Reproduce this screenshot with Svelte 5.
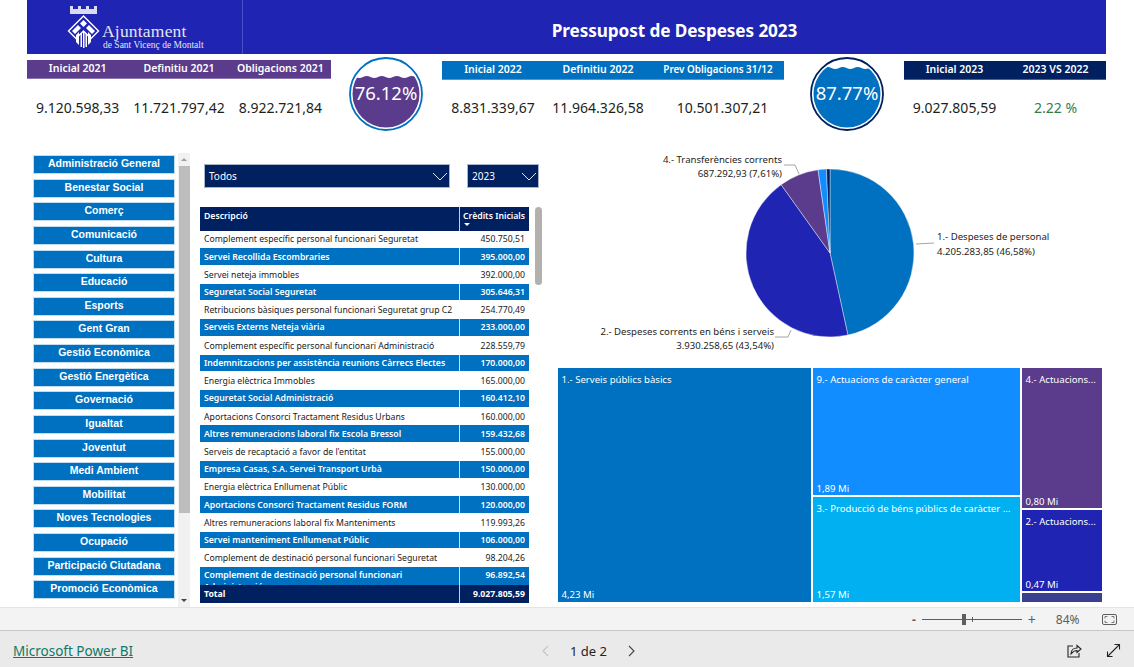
<script>
  const areas = [
    "Administració General", "Benestar Social", "Comerç", "Comunicació", "Cultura", "Educació",
    "Esports", "Gent Gran", "Gestió Econòmica", "Gestió Energètica", "Governació", "Igualtat",
    "Joventut", "Medi Ambient", "Mobilitat", "Noves Tecnologies", "Ocupació",
    "Participació Ciutadana", "Promoció Econòmica",
  ];

  const rows = [
    ["Complement específic personal funcionari Seguretat", "450.750,51"],
    ["Servei Recollida Escombraries", "395.000,00"],
    ["Servei neteja immobles", "392.000,00"],
    ["Seguretat Social Seguretat", "305.646,31"],
    ["Retribucions bàsiques personal funcionari Seguretat grup C2", "254.770,49"],
    ["Serveis Externs Neteja viària", "233.000,00"],
    ["Complement específic personal funcionari Administració", "228.559,79"],
    ["Indemnitzacions per assistència reunions Càrrecs Electes", "170.000,00"],
    ["Energia elèctrica Immobles", "165.000,00"],
    ["Seguretat Social Administració", "160.412,10"],
    ["Aportacions Consorci Tractament Residus Urbans", "160.000,00"],
    ["Altres remuneracions laboral fix Escola Bressol", "159.432,68"],
    ["Serveis de recaptació a favor de l'entitat", "155.000,00"],
    ["Empresa Casas, S.A. Servei Transport Urbà", "150.000,00"],
    ["Energia elèctrica Enllumenat Públic", "130.000,00"],
    ["Aportacions Consorci Tractament Residus FORM", "120.000,00"],
    ["Altres remuneracions laboral fix Manteniments", "119.993,26"],
    ["Servei manteniment Enllumenat Públic", "106.000,00"],
    ["Complement de destinació personal funcionari Seguretat", "98.204,26"],
  ];

  const slices = [
    { pct: 46.58, color: "#0070c0" },
    { pct: 43.54, color: "#2024b2" },
    { pct: 7.61, color: "#5a3b8c" },
    { pct: 1.6, color: "#118dff" },
    { pct: 0.67, color: "#00205f" },
  ];

  const cx = 272;
  const cy = 100;
  const r = 84;

  function arcs() {
    let acc = 0;
    return slices.map((s) => {
      const a0 = (acc / 100) * Math.PI * 2;
      acc += s.pct;
      const a1 = (acc / 100) * Math.PI * 2;
      const large = s.pct > 50 ? 1 : 0;
      const x0 = cx + r * Math.sin(a0);
      const y0 = cy - r * Math.cos(a0);
      const x1 = cx + r * Math.sin(a1);
      const y1 = cy - r * Math.cos(a1);
      return {
        color: s.color,
        d: `M${cx} ${cy}L${x0.toFixed(2)} ${y0.toFixed(2)}A${r} ${r} 0 ${large} 1 ${x1.toFixed(2)} ${y1.toFixed(2)}Z`,
      };
    });
  }
</script>

{#snippet gauge(color, ring, value, level)}
  <svg class="gauge" width="76" height="76" viewBox="0 0 76 76">
    <defs>
      <clipPath id={"c" + level}><circle cx="38" cy="38" r="33.5" /></clipPath>
    </defs>
    <circle cx="38" cy="38" r="36" fill="#fff" stroke={ring} stroke-width="1.8" />
    <path
      clip-path={"url(#c" + level + ")"}
      fill={color}
      d={`M0 ${level}q3.750 -2 7.500 0t7.500 0 7.500 0 7.500 0 7.500 0 7.500 0 7.500 0 7.500 0 7.500 0 7.500 0 7.500 0V76H0Z`}
    />
    <text x="38" y="44" text-anchor="middle" class="gauge-text">{value}</text>
  </svg>
{/snippet}

{#snippet chevron()}
  <svg width="16" height="9" viewBox="0 0 16 9"><path d="M1 1l7 7 7-7" fill="none" stroke="#dfe4ee" stroke-width="1" /></svg>
{/snippet}

<div class="page">
  <div class="report">
    <header class="banner">
      <div class="logo">
        <svg width="33" height="44" viewBox="0 0 33 44">
          <path fill="#d9d9f0" d="M3 1h3v3h5V1h3v3h5V1h3v3h5V1h3v8H3z" />
          <path fill="none" stroke="#fff" stroke-width="1.400" d="M16.500 11L31.500 26 24 33.500 16.500 26 9 33.500 1.500 26z" />
          <path fill="#fff" d="M16.500 15l3.500 3.500-3.500 3.500-3.500-3.500zM5 26l6-6 3 3-6 6zM28 26l-6-6-3 3 6 6z" />
          <path fill="#fff" d="M9 30l3-3v13l-3-3zM24 30l-3-3v13l3-3z" />
          <path fill="#fff" d="M13.500 28h1.500v14h-1.500zM16 27h1.500v16H16zM18.500 28H20v14h-1.500z" />
        </svg>
        <div class="logo-text">
          <span class="logo-main">Ajuntament</span>
          <span class="logo-sub">de Sant Vicenç de Montalt</span>
        </div>
      </div>
      <h1>Pressupost de Despeses 2023</h1>
    </header>

    <section class="kpis">
      <div class="kpi-group g2021">
        <div class="heads purple">
          <span>Inicial 2021</span><span>Definitiu 2021</span><span>Obligacions 2021</span>
        </div>
        <div class="vals"><span>9.120.598,33</span><span>11.721.797,42</span><span>8.922.721,84</span></div>
      </div>
      <div class="gauge-wrap gw1">{@render gauge("#5a3b8c", "#0070c0", "76.12%", 21)}</div>
      <div class="kpi-group g2022">
        <div class="heads blue">
          <span class="c1">Inicial 2022</span><span class="c2">Definitiu 2022</span><span class="c3 small">Prev Obligacions 31/12</span>
        </div>
        <div class="vals"><span class="c1">8.831.339,67</span><span class="c2">11.964.326,58</span><span class="c3 nudge">10.501.307,21</span></div>
      </div>
      <div class="gauge-wrap gw2">{@render gauge("#0070c0", "#00205f", "87.77%", 12)}</div>
      <div class="kpi-group g2023">
        <div class="heads navy">
          <span>Inicial 2023</span><span>2023 VS 2022</span>
        </div>
        <div class="vals"><span>9.027.805,59</span><span class="green">2.22 %</span></div>
      </div>
    </section>

    <section class="body">
      <aside class="slicer">
        <ul>
          {#each areas as area}
            <li>{area}</li>
          {/each}
        </ul>
        <div class="scroll">
          <span class="arrow up"></span>
          <span class="thumb"></span>
          <span class="arrow down"></span>
        </div>
      </aside>

      <div class="middle">
        <div class="filters">
          <div class="drop wide"><span>Todos</span>{@render chevron()}</div>
          <div class="drop narrow"><span>2023</span>{@render chevron()}</div>
        </div>
        <div class="table-wrap">
          <div class="table">
            <div class="row head">
              <span class="desc">Descripció</span>
              <span class="amt">Crèdits Inicials<i class="sort"></i></span>
            </div>
            {#each rows as row, i}
              <div class="row" class:alt={i % 2 === 1}>
                <span class="desc">{row[0]}</span>
                <span class="amt">{row[1]}</span>
              </div>
            {/each}
            <div class="row alt clipped">
              <span class="desc">Complement de destinació personal funcionari Administració</span>
              <span class="amt">96.892,54</span>
            </div>
            <div class="row total">
              <span class="desc">Total</span>
              <span class="amt">9.027.805,59</span>
            </div>
          </div>
          <span class="table-thumb"></span>
        </div>
      </div>

      <div class="charts">
        <svg class="pie" width="544" height="212" viewBox="0 0 544 212">
          {#each arcs() as a}
            <path d={a.d} fill={a.color} stroke="#fff" stroke-width="0.4" />
          {/each}
          <path class="leader" d="M226 12h11l4 9" />
          <path class="leader" d="M358 91L376 90" />
          <path class="leader" d="M233 177l-3 7h-13" />
          <text class="lbl" x="224" y="10" text-anchor="end">4.- Transferències corrents</text>
          <text class="lbl" x="224" y="24" text-anchor="end">687.292,93 (7,61%)</text>
          <text class="lbl" x="379" y="87">1.- Despeses de personal</text>
          <text class="lbl" x="379" y="102">4.205.283,85 (46,58%)</text>
          <text class="lbl" x="216" y="182" text-anchor="end">2.- Despeses corrents en béns i serveis</text>
          <text class="lbl" x="216" y="196" text-anchor="end">3.930.258,65 (43,54%)</text>
        </svg>

        <div class="treemap">
          <div class="tile t1"><span>1.- Serveis públics bàsics</span><span>4,23 Mi</span></div>
          <div class="tcol mid">
            <div class="tile t9"><span>9.- Actuacions de caràcter general</span><span>1,89 Mi</span></div>
            <div class="tile t3"><span>3.- Producció de béns públics de caràcter ...</span><span>1,57 Mi</span></div>
          </div>
          <div class="tcol right">
            <div class="tile t4"><span>4.- Actuacions...</span><span>0,80 Mi</span></div>
            <div class="tile t2"><span>2.- Actuacions...</span><span>0,47 Mi</span></div>
            <div class="tile t0"></div>
          </div>
        </div>
      </div>
    </section>
  </div>

  <div class="zoombar">
    <span class="minus">-</span>
    <div class="slider"><i class="knob"></i><i class="tick"></i></div>
    <span class="plus">+</span>
    <span class="pct">84%</span>
    <svg width="15" height="11" viewBox="0 0 15 11" class="fit">
      <rect x="0.5" y="0.5" width="14" height="10" rx="1.5" fill="none" stroke="#605e5c" />
      <path d="M3 4.5V2.5h2.5M12 4.5V2.5H9.500M3 6.500v2h2.500M12 6.500v2H9.500" fill="none" stroke="#605e5c" stroke-width="0.8" />
    </svg>
  </div>

  <footer class="footer">
    <a class="brand" href="#top">Microsoft Power BI</a>
    <div class="pager">
      <svg width="9" height="12" viewBox="0 0 9 12"><path d="M7 1L2 6l5 5" fill="none" stroke="#c4c4c4" stroke-width="1.100" /></svg>
      <span>1 de 2</span>
      <svg width="9" height="12" viewBox="0 0 9 12"><path d="M2 1l5 5-5 5" fill="none" stroke="#444" stroke-width="1.100" /></svg>
    </div>
    <div class="actions">
      <svg width="16" height="16" viewBox="0 0 16 16">
        <path d="M7 3H2v11h11v-4" fill="none" stroke="#252423" stroke-width="1.100" />
        <path d="M5 11c0-4 3-6 6-6V2.500L15 6l-4 3.500V7.500c-2 0-4 1-6 3.500z" fill="none" stroke="#252423" stroke-width="1.100" />
      </svg>
      <svg width="15" height="15" viewBox="0 0 15 15">
        <path d="M1.500 13.500l12-12M8.500 1.500h5v5M1.500 8.500v5h5" fill="none" stroke="#252423" stroke-width="1.100" />
      </svg>
    </div>
  </footer>
</div>

<style>
  :global(body) {
    margin: 0;
    background: #fff;
  }

  .page {
    width: 1134px;
    height: 667px;
    overflow: hidden;
    display: flex;
    flex-direction: column;
    font-family: "Noto Sans", "Open Sans", sans-serif;
    color: #252423;
  }

  .report {
    height: 607px;
    padding-left: 27px;
    box-sizing: border-box;
    background: #fff;
    overflow: hidden;
  }

  .banner {
    width: 1079px;
    height: 54px;
    background: #2024b2;
    display: flex;
    align-items: center;
    color: #fff;
  }

  .logo {
    width: 216px;
    height: 54px;
    box-sizing: border-box;
    border-right: 1px solid #4a4ec4;
    padding: 5px 0 0 40px;
    display: flex;
    align-items: flex-start;
  }

  .logo-text {
    display: flex;
    flex-direction: column;
    font-family: "Liberation Serif", serif;
    color: #e4e4f4;
    margin: 18px 0 0 2px;
  }

  .logo-main {
    font-size: 17.5px;
    line-height: 16px;
    letter-spacing: 0.2px;
  }

  .logo-sub {
    font-size: 9.5px;
    line-height: 12px;
    margin-left: 1px;
    white-space: nowrap;
  }

  h1 {
    flex: 1;
    margin: 6px 0 0;
    text-align: center;
    font-size: 17.2px;
    font-weight: 700;
    font-family: "Noto Sans", sans-serif;
    letter-spacing: -0.1px;
  }

  .kpis {
    display: flex;
    align-items: flex-start;
    height: 99px;
    width: 1079px;
  }

  .kpi-group {
    margin-top: 7px;
  }

  .g2021 { width: 304px; margin-top: 6px; }
  .g2022 { width: 342px; }
  .g2023 { width: 202px; }

  .g2021 .vals { margin-top: 19px; }

  .c1 { flex: 0 0 102px !important; }
  .c2 { flex: 0 0 108px !important; }
  .c3 { flex: 0 0 132px !important; }
  .small { font-size: 9.9px; }
  .nudge { box-sizing: border-box; padding-left: 9px; }

  .gauge-wrap {
    height: 76px;
    margin-top: 2px;
    display: flex;
    justify-content: center;
    box-sizing: border-box;
  }

  .gw1 { width: 111px; padding-right: 2px; }
  .gw2 { width: 120px; padding-left: 6px; }

  .heads,
  .vals {
    display: flex;
  }

  .heads {
    height: 19px;
    align-items: center;
    color: #fff;
    font-size: 10.5px;
    font-weight: 600;
    box-sizing: border-box;
    padding-bottom: 2px;
    border-bottom: 1px solid rgba(255, 255, 255, 0.3);
  }

  .heads span,
  .vals span {
    flex: 1;
    text-align: center;
    white-space: nowrap;
  }

  .purple { background: #5a3b8c; }
  .blue { background: #0070c0; }
  .navy { background: #00205f; }

  .vals {
    margin-top: 18px;
    font-size: 14px;
    line-height: 20px;
    color: #201f1e;
  }

  .green {
    color: #2e7d4f;
  }

  .gauge-text {
    font-family: "Noto Sans", sans-serif;
    font-size: 18.5px;
    fill: #fff;
  }

  .body {
    display: flex;
    align-items: flex-start;
  }

  .slicer {
    display: flex;
    width: 173px;
    height: 454px;
  }

  .slicer ul {
    list-style: none;
    margin: 2px 0 0 6px;
    padding: 0;
    width: 144px;
    display: flex;
    flex-direction: column;
    gap: 4.64px;
  }

  .slicer li {
    height: 19px;
    width: 142px;
    box-sizing: border-box;
    border: 1.5px solid #c4dcf0;
    background: #0070c0;
    color: #fff;
    text-align: center;
    font: 700 10.5px/15px "Liberation Sans", Arial, sans-serif;
    white-space: nowrap;
  }

  .scroll {
    width: 12px;
    margin-left: 1px;
    background: #f1f1f1;
    display: flex;
    flex-direction: column;
    align-items: stretch;
    position: relative;
  }

  .thumb {
    display: block;
    background: #bdbdbd;
    height: 347px;
    margin: 13px 0 0 1px;
    width: 11px;
  }

  .arrow {
    position: absolute;
    left: 3px;
    border-left: 3px solid transparent;
    border-right: 3px solid transparent;
  }

  .arrow.up {
    top: 5px;
    border-bottom: 3px solid #a0a0a0;
  }

  .arrow.down {
    bottom: 5px;
    border-top: 3px solid #444;
  }

  .middle {
    width: 358px;
  }

  .filters {
    display: flex;
    padding: 11px 0 0 4px;
    gap: 17px;
  }

  .drop {
    height: 24px;
    box-sizing: border-box;
    border: 1.5px solid #a9b4cb;
    background: #00205f;
    color: #fff;
    font-size: 10px;
    display: flex;
    align-items: center;
    justify-content: space-between;
    padding: 0 1px 0 4px;
  }

  .wide { width: 246px; }
  .narrow { width: 72px; }

  .table-wrap {
    display: flex;
    margin-top: 19px;
  }

  .table {
    width: 329px;
    height: 396px;
    overflow: hidden;
    font-size: 8.7px;
  }

  .row {
    display: flex;
    height: 17.72px;
    box-sizing: border-box;
    align-items: center;
    white-space: nowrap;
    color: #1a1a1a;
  }

  .desc {
    width: 260px;
    box-sizing: border-box;
    padding-left: 4px;
    border-right: 1px solid transparent;
    overflow: hidden;
    height: 100%;
    display: flex;
    align-items: center;
  }

  .amt {
    flex: 1;
    text-align: right;
    padding-right: 4px;
  }

  .row.alt {
    background: #0070c0;
    color: #fff;
    font-weight: 600;
    border-bottom: 1px solid #fff;
  }

  .row.alt .desc {
    border-right-color: #cfe2f3;
  }

  .row.head {
    height: 23.5px;
    background: #00205f;
    color: #fff;
    font-weight: 600;
    align-items: flex-start;
  }

  .row.head .desc {
    border-right-color: #c8d0e0;
    align-items: flex-start;
    padding-top: 3px;
  }

  .row.head .amt {
    text-align: left;
    padding: 3px 0 0 3px;
    position: relative;
  }

  .sort {
    position: absolute;
    left: 4px;
    top: 16px;
    border-left: 3px solid transparent;
    border-right: 3px solid transparent;
    border-top: 3px solid #fff;
  }

  .row.clipped {
    height: 17.5px;
    align-items: flex-start;
    border-bottom: 0;
  }

  .row.clipped .desc {
    white-space: normal;
    padding-top: 2px;
    padding-right: 50px;
    line-height: 12px;
    align-items: flex-start;
  }

  .row.clipped .amt {
    padding-top: 2px;
  }

  .row.total {
    height: 18px;
    background: #00205f;
    color: #fff;
    font-weight: 700;
  }

  .row.total .desc {
    border-right-color: #c8d0e0;
  }

  .table-thumb {
    width: 7px;
    height: 78px;
    border-radius: 4px;
    background: #b3b0ad;
    margin-left: 6px;
  }

  .charts {
    width: 544px;
  }

  .pie {
    display: block;
  }

  .leader {
    fill: none;
    stroke: #a6a6a6;
    stroke-width: 1;
  }

  .lbl {
    font-size: 9.6px;
    fill: #252423;
  }

  .treemap {
    display: flex;
    gap: 2px;
    height: 234px;
    margin-top: 3px;
    color: #fff;
    font-size: 9.6px;
  }

  .tcol {
    display: flex;
    flex-direction: column;
    gap: 2px;
  }

  .mid { width: 207px; }
  .right { width: 80px; }

  .tile {
    box-sizing: border-box;
    padding: 5px 4px 1px 3.5px;
    display: flex;
    flex-direction: column;
    justify-content: space-between;
    white-space: nowrap;
    overflow: hidden;
    line-height: 13px;
  }

  .t1 { width: 253px; background: #0070c0; }
  .t9 { height: 127px; background: #118dff; padding-bottom: 0; }
  .t3 { flex: 1; background: #00b0f0; }
  .t4 { height: 140px; background: #5a3b8c; padding-bottom: 0; }
  .t2 { height: 81px; background: #2024b2; padding-bottom: 0; }
  .t0 { flex: 1; background: #3a3f8f; padding: 0; }

  .zoombar {
    height: 24px;
    background: #f3f3f3;
    border-top: 1px solid #e4e4e4;
    border-bottom: 1px solid #c8c8c8;
    box-sizing: border-box;
    display: flex;
    align-items: center;
    padding-left: 912px;
    color: #605e5c;
    font-size: 12px;
  }

  .slider {
    width: 100px;
    height: 1px;
    background: #605e5c;
    margin: 0 6px;
    position: relative;
  }

  .knob {
    position: absolute;
    left: 40px;
    top: -5px;
    width: 4px;
    height: 11px;
    background: #605e5c;
  }

  .tick {
    position: absolute;
    left: 50px;
    top: -2px;
    width: 1px;
    height: 5px;
    background: #605e5c;
  }

  .minus { font-weight: 700; }
  .plus { font-size: 14px; }
  .pct { margin-left: 20px; font-size: 12px; }
  .fit { margin-left: 22px; }

  .footer {
    flex: 1;
    background: #eaeaea;
    display: flex;
    align-items: center;
    position: relative;
    padding: 3px 13px 0;
  }

  .brand {
    color: #117865;
    font-size: 13.5px;
    text-decoration: underline;
  }

  .pager {
    position: absolute;
    left: 541px;
    display: flex;
    align-items: center;
    gap: 20px;
    color: #252423;
    font-size: 13px;
  }

  .actions {
    margin-left: auto;
    display: flex;
    gap: 24px;
    align-items: center;
  }
</style>
